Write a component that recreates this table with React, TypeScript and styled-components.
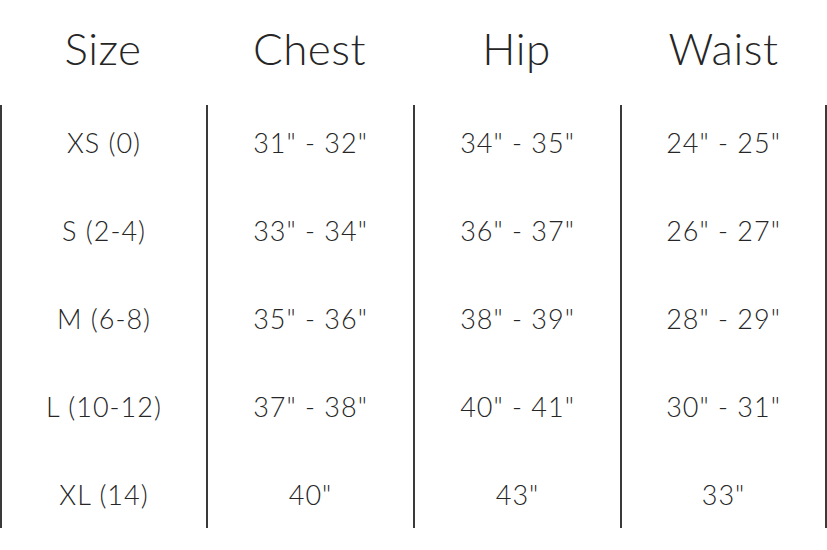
import styled, { createGlobalStyle } from "styled-components"

const GlobalStyle = createGlobalStyle`
  html, body {
    margin: 0;
    padding: 0;
    background: #ffffff;
  }
`

const columns = [
  { title: "Size", values: ["XS (0)", "S (2-4)", "M (6-8)", "L (10-12)", "XL (14)"] },
  { title: "Chest", values: ['31" - 32"', '33" - 34"', '35" - 36"', '37" - 38"', '40"'] },
  { title: "Hip", values: ['34" - 35"', '36" - 37"', '38" - 39"', '40" - 41"', '43"'] },
  { title: "Waist", values: ['24" - 25"', '26" - 27"', '28" - 29"', '30" - 31"', '33"'] },
]

export default function App() {
  return (
    <>
      <GlobalStyle />
      <Chart>
        {columns.map((col, i) => (
          <Column key={col.title}>
            <Heading>{col.title}</Heading>
            <Body $last={i === columns.length - 1}>
              {col.values.map((v) => (
                <Cell key={v}>{v}</Cell>
              ))}
            </Body>
          </Column>
        ))}
      </Chart>
    </>
  )
}

const Chart = styled.div`
  width: 827px;
  height: 550px;
  display: grid;
  grid-template-columns: 206px 207px 207px 207px;
  font-family: Lato, "Liberation Sans", sans-serif;
  color: #262626;
`

const Column = styled.div`
  display: flex;
  flex-direction: column;
`

const Heading = styled.div`
  height: 105px;
  display: flex;
  align-items: center;
  justify-content: center;
  padding-bottom: 10px;
  box-sizing: border-box;
  font-size: 44px;
  font-weight: 300;
  letter-spacing: 0.5px;
`

const Body = styled.div<{ $last: boolean }>`
  height: 423px;
  display: flex;
  flex-direction: column;
  justify-content: space-between;
  align-items: center;
  padding: 24px 0 19px;
  box-sizing: border-box;
  border-left: 2px solid #3a3a3a;
  border-right: ${(p) => (p.$last ? "2px solid #3a3a3a" : "none")};
`

const Cell = styled.div`
  height: 28px;
  line-height: 28px;
  font-size: 27px;
  font-weight: 300;
  letter-spacing: 1px;
  white-space: nowrap;
`
